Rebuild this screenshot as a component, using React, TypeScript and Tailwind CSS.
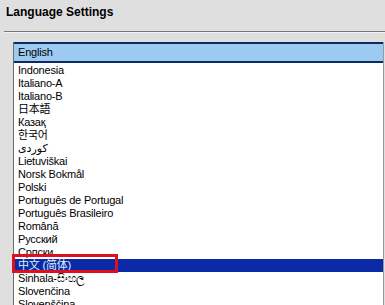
import React from "react";

const items = [
  "Indonesia",
  "Italiano-A",
  "Italiano-B",
  "日本語",
  "Казақ",
  "한국어",
  "کوردی",
  "Lietuviškai",
  "Norsk Bokmål",
  "Polski",
  "Português de Portugal",
  "Português Brasileiro",
  "Română",
  "Русский",
  "Српски",
  "中文 (简体)",
  "Sinhala-සිංහල",
  "Slovenčina",
  "Slovenščina",
];

export default function App() {
  return (
    <div
      className="relative w-[385px] h-[305px] overflow-hidden bg-[#dfdfdf] text-black"
      style={{ fontFamily: '"Liberation Sans", "Noto Sans CJK SC", "DejaVu Sans", sans-serif' }}
    >
      <div className="pl-[6px] pt-[4px] h-[31px] text-[12px] font-bold leading-[16px]">Language Settings</div>
      <div className="ml-[4px] h-[2px] border-t border-[#7a7570] border-b border-b-[#f4f4f4]" />
      <div className="mt-[9px] ml-[13px] w-[371px] border-r border-[#9a9a9a] border-l border-l-[#6d6d6d] bg-white">
        <div className="h-[21px] bg-[#9ccaf1] border-y-2 border-[#0b2a5e] pl-[4px] text-[11px] leading-[17px] tracking-[-0.2px]">English</div>
        <div className="pt-[1px]">
          {items.map((it, i) => {
            const sel = i === 15;
            return (
              <div
                key={i}
                className={
                  sel
                    ? "h-[13px] leading-[13px] text-[11px] tracking-[-0.2px] pl-[4px] bg-[#0a2aa6] text-[#dff0ff] whitespace-nowrap"
                    : "h-[13px] leading-[13px] text-[11px] tracking-[-0.2px] pl-[4px] whitespace-nowrap"
                }
              >
                {sel ? <span className="underline decoration-dotted">{it}</span> : it}
              </div>
            );
          })}
        </div>
      </div>
      <div className="absolute left-[12px] top-[254px] w-[106px] h-[19px] border-[3px] border-[#dd1020]" />
    </div>
  );
}
